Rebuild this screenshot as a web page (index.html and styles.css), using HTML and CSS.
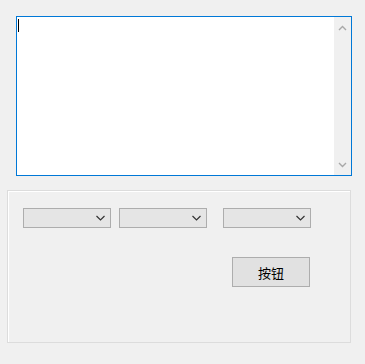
FILE: index.html
```html
<!doctype html>
<html lang="zh">
<head>
    <meta charset="UTF-8">
    <title>Form</title>
    <link rel="stylesheet" href="styles.css">
</head>
<body>
<div class="editor">
    <div class="editor-text"><span class="caret"></span></div>
    <div class="scrollbar">
        <svg class="arrow" width="9" height="6" viewBox="0 0 9 6"><path d="M1 5 L4.5 1.5 L8 5" fill="none" stroke="#a8a8a8" stroke-width="1.4"/></svg>
        <svg class="arrow" width="9" height="6" viewBox="0 0 9 6"><path d="M1 1 L4.5 4.5 L8 1" fill="none" stroke="#a8a8a8" stroke-width="1.4"/></svg>
    </div>
</div>

<div class="group">
    <div class="row">
        <div class="combo combo-a">
            <svg width="9" height="6" viewBox="0 0 9 6"><path d="M0.5 1 L4.5 5 L8.5 1" fill="none" stroke="#333" stroke-width="1.2"/></svg>
        </div>
        <div class="combo combo-b">
            <svg width="9" height="6" viewBox="0 0 9 6"><path d="M0.5 1 L4.5 5 L8.5 1" fill="none" stroke="#333" stroke-width="1.2"/></svg>
        </div>
        <div class="combo combo-c">
            <svg width="9" height="6" viewBox="0 0 9 6"><path d="M0.5 1 L4.5 5 L8.5 1" fill="none" stroke="#333" stroke-width="1.2"/></svg>
        </div>
    </div>
    <button class="btn" type="button">按钮</button>
</div>
</body>
</html>
```

FILE: styles.css
```css
body {
    margin: 0;
    background-color: #f0f0f0;
    font-family: "Noto Sans CJK SC", "Liberation Sans", sans-serif;
}

.editor {
    display: flex;
    width: 336px;
    height: 160px;
    margin: 16px 0 0 16px;
    border: 1px solid #0078d7;
    box-sizing: border-box;
    background-color: #fff;
}

.editor-text {
    flex: 1;
    padding: 2px 0 0 1px;
}

.caret {
    display: block;
    width: 1px;
    height: 13px;
    background-color: #000;
}

.scrollbar {
    width: 17px;
    display: flex;
    flex-direction: column;
    justify-content: space-between;
    align-items: center;
    padding: 8px 0 7px;
    background-color: #f0f0f0;
}

.arrow {
    display: block;
}

.group {
    width: 344px;
    height: 153px;
    margin: 14px 0 0 7px;
    padding: 17px 15px 0;
    box-sizing: border-box;
    border: 1px solid #dcdcdc;
    box-shadow: inset 1px 1px 0 #fff;
}

.row {
    display: flex;
}

.combo {
    width: 88px;
    height: 20px;
    box-sizing: border-box;
    border: 1px solid #adadad;
    background-color: #e5e5e5;
    display: flex;
    align-items: center;
    justify-content: flex-end;
    padding-right: 5px;
}

.combo-b {
    margin-left: 8px;
}

.combo-c {
    margin-left: 16px;
}

.btn {
    display: block;
    width: 78px;
    height: 30px;
    margin: 29px 0 0 209px;
    border: 1px solid #adadad;
    background-color: #e1e1e1;
    font-family: "Noto Sans CJK SC", sans-serif;
    font-size: 13px;
    color: #000;
    padding: 0;
}
```
